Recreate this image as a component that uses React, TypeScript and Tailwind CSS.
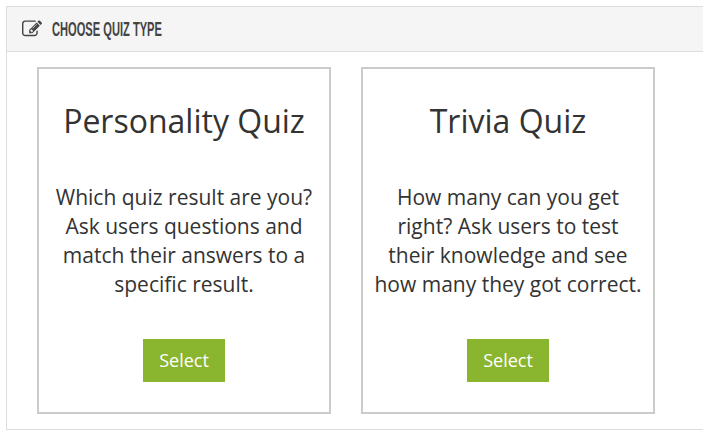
interface QuizCardProps {
  title: string
  lines: string[]
}

const EditIcon: React.FC = () => {
  return (
    <svg viewBox="0 0 1792 1792" fill="currentColor" className="size-5 shrink-0">
      <path d="M888 1184l116-116-152-152-116 116v56h96v96h56zm440-720q-16-16-33 1l-350 350q-17 17-1 33t33-1l350-350q17-17 1-33zm80 594v190q0 119-84.5 203.5t-203.5 84.5h-832q-119 0-203.5-84.5t-84.5-203.5v-832q0-119 84.5-203.5t203.5-84.5h832q63 0 117 25 15 7 18 23 3 17-9 29l-49 49q-14 14-32 8-23-6-45-6h-832q-66 0-113 47t-47 113v832q0 66 47 113t113 47h832q66 0 113-47t47-113v-126q0-13 9-22l64-64q15-15 35-7t20 29zm-96-738l288 288-672 672h-288v-288zm444 132l-92 92-288-288 92-92q28-28 68-28t68 28l152 152q28 28 28 68t-28 68z" />
    </svg>
  )
}

const QuizCard: React.FC<QuizCardProps> = ({ title, lines }) => {
  return (
    <div className="flex h-[347px] w-[294px] shrink-0 flex-col items-center border-2 border-[#cbcbcb] pt-[30px]">
      <h2 className="text-[32px] leading-[43px] whitespace-nowrap">{title}</h2>
      <p className="mt-[41px] text-center text-[21px] leading-[29px] whitespace-nowrap">
        {lines.map((line) => (
          <span key={line} className="block">
            {line}
          </span>
        ))}
      </p>
      <button className="mt-[40px] h-[43px] w-[82px] bg-[#8ab52f] text-[18px] text-white">
        Select
      </button>
    </div>
  )
}

const App: React.FC = () => {
  return (
    <div className="h-[438px] w-[703px] overflow-hidden bg-white pt-[6px] pl-[6px] font-['Open_Sans',sans-serif] text-[#333]">
      <div className="h-[424px] border border-r-0 border-[#ddd]">
        <div className="flex h-[45px] items-center border-b border-[#ddd] bg-[#f5f5f5] pl-[15px] text-[#444]">
          <EditIcon />
          <h1 className="ml-[10px] origin-left scale-x-[0.57] pt-[2px] font-['Liberation_Sans',sans-serif] text-[19.5px] font-bold whitespace-nowrap">
            CHOOSE QUIZ TYPE
          </h1>
        </div>
        <div className="flex gap-[30px] pt-[15px] pl-[30px]">
          <QuizCard
            title="Personality Quiz"
            lines={["Which quiz result are you?", "Ask users questions and", "match their answers to a", "specific result."]}
          />
          <QuizCard
            title="Trivia Quiz"
            lines={["How many can you get", "right? Ask users to test", "their knowledge and see", "how many they got correct."]}
          />
        </div>
      </div>
    </div>
  )
}

export default App
